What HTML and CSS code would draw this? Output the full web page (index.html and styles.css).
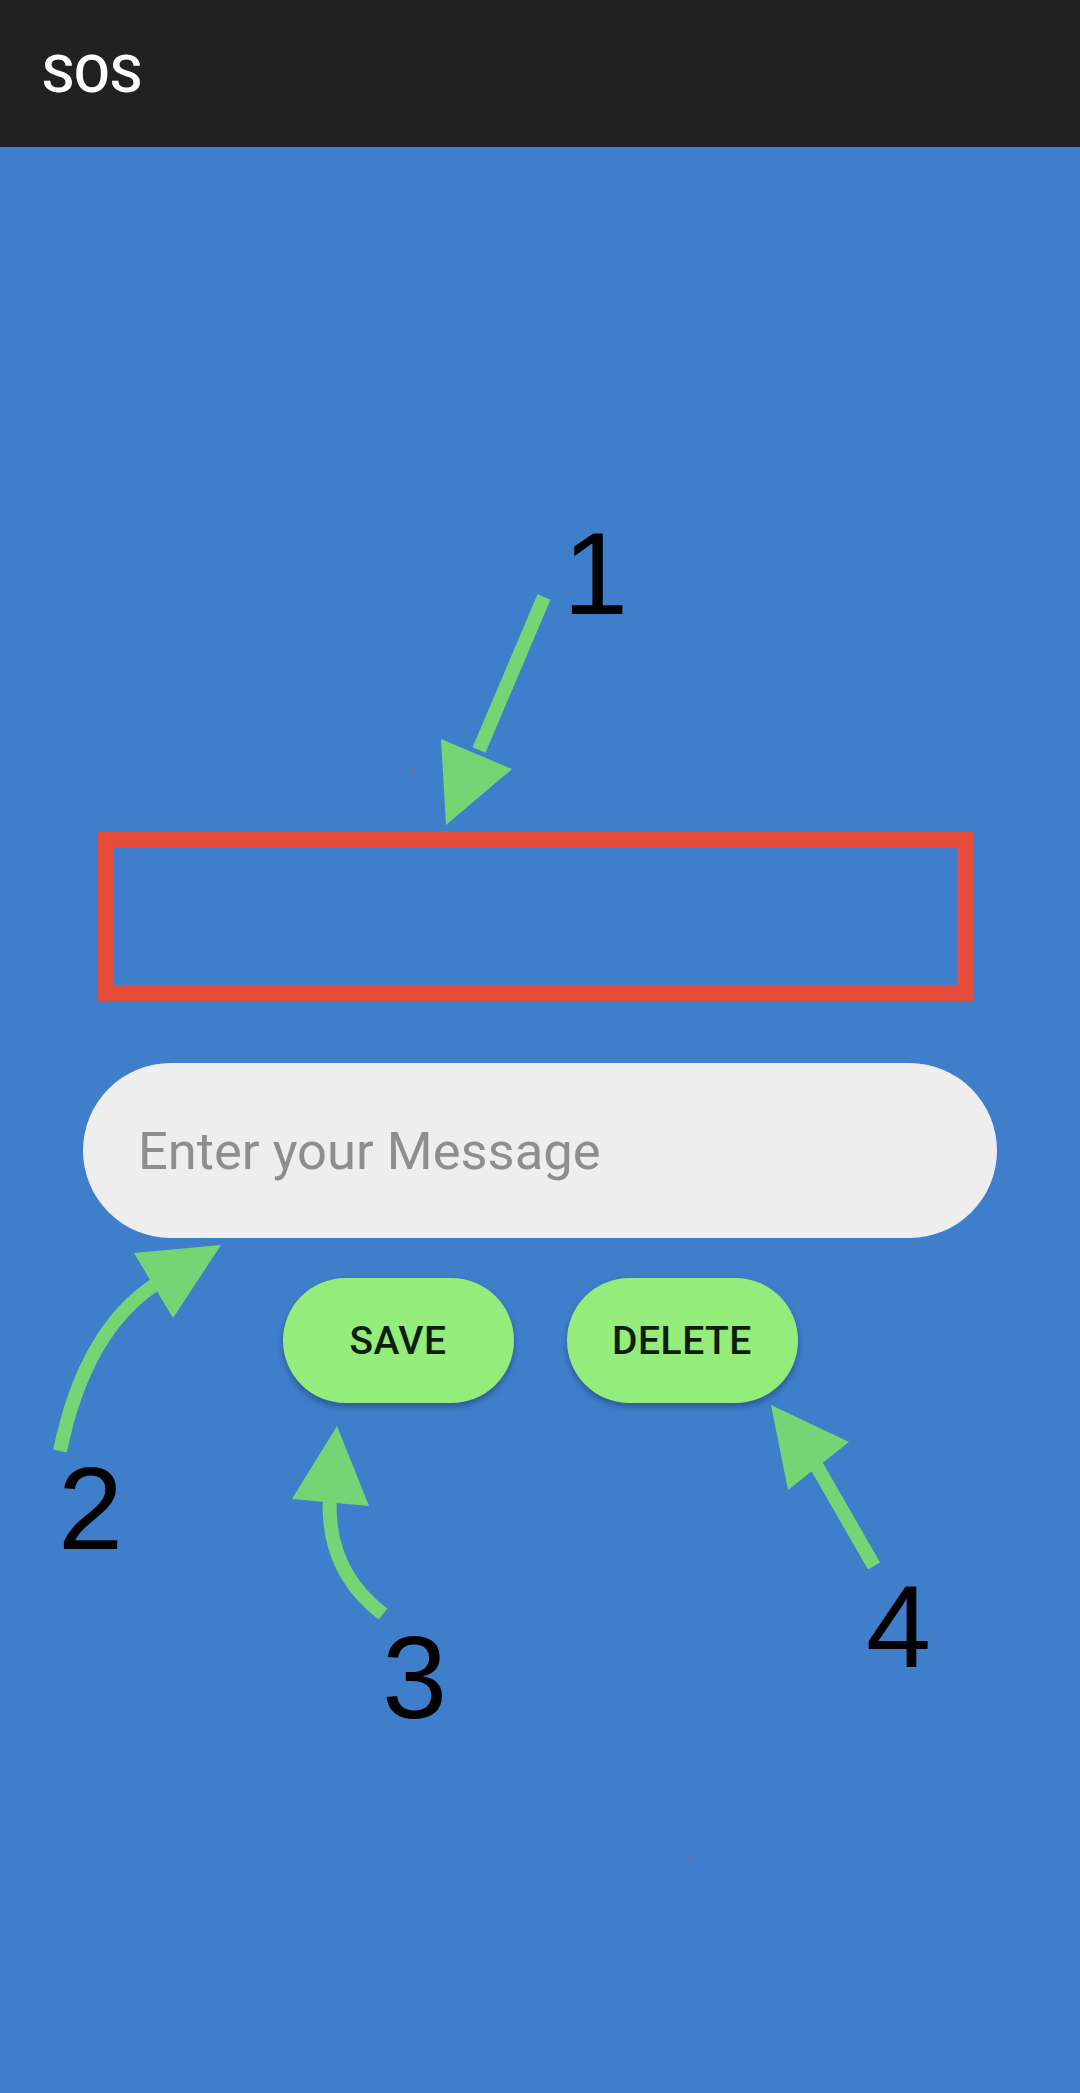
FILE: index.html
```html
<!DOCTYPE html>
<html lang="en">
<head>
<meta charset="utf-8">
<title>SOS</title>
<link rel="stylesheet" href="styles.css">
</head>
<body>
<div class="screen">
  <header class="toolbar">
    <h1 class="title">SOS</h1>
  </header>
  <main class="content">
    <input class="message" type="text" placeholder="Enter your Message">
    <div class="actions">
      <button class="btn" type="button">SAVE</button>
      <button class="btn" type="button">DELETE</button>
    </div>
  </main>
  <svg class="annotations" width="1080" height="2093" viewBox="0 0 1080 2093" aria-hidden="true">
    <rect class="frame" x="105" y="839" width="860" height="154"/>
    <g class="arrow">
      <line x1="544" y1="597" x2="479" y2="750"/>
      <polygon points="441,739 512,769 446,825"/>
      <path d="M60,1451 Q85,1330 156,1284"/>
      <polygon points="134,1253 221,1245 173,1318"/>
      <path d="M383,1614 Q325,1570 330,1495"/>
      <polygon points="337,1426 292,1499 369,1506"/>
      <line x1="874" y1="1566" x2="812" y2="1458"/>
      <polygon points="771,1405 849,1442 788,1490"/>
    </g>
    <g class="num">
      <text x="563" y="614">1</text>
      <text x="58" y="1549">2</text>
      <text x="382" y="1718">3</text>
      <text x="866" y="1667">4</text>
    </g>
    <circle class="speck" cx="413" cy="771" r="1.6"/>
    <circle class="speck" cx="688" cy="1860" r="1.6"/>
  </svg>
</div>
</body>
</html>
```

FILE: styles.css
```css
html, body {
  margin: 0;
  padding: 0;
}

body {
  width: 1080px;
  height: 2093px;
  overflow: hidden;
  background: #3e7ecb;
  font-family: Roboto, "Noto Sans", "Liberation Sans", sans-serif;
}

.screen {
  position: relative;
  width: 1080px;
  height: 2093px;
  background: #3e7ecb;
}

.toolbar {
  height: 147px;
  background: #212121;
  display: flex;
  align-items: center;
  padding-left: 42px;
  box-sizing: border-box;
}

.title {
  margin: 0;
  color: #ffffff;
  font-size: 52.5px;
  font-weight: 500;
  line-height: 1;
  padding-top: 2px;
}

.content {
  display: flex;
  flex-direction: column;
  align-items: center;
  padding-top: 916px;
}

.message {
  display: block;
  width: 914px;
  height: 175px;
  box-sizing: border-box;
  border: none;
  outline: none;
  border-radius: 88px;
  background: #efeeef;
  padding: 0 40px 0 55px;
  margin: 0;
  font-family: Roboto, "Noto Sans", sans-serif;
  font-size: 52.5px;
  color: #333;
}

.message::placeholder {
  color: #8e8e8e;
  opacity: 1;
}

.actions {
  display: flex;
  gap: 53px;
  margin-top: 40px;
}

.btn {
  width: 231px;
  height: 125px;
  border: none;
  border-radius: 63px;
  background: #94ec7b;
  color: #0f1d0b;
  font-family: Roboto, "Noto Sans", sans-serif;
  font-size: 39px;
  font-weight: 500;
  letter-spacing: 0.5px;
  padding: 0;
  box-shadow: 0 4px 6px rgba(0, 0, 0, 0.28);
  cursor: pointer;
}

.annotations {
  position: absolute;
  left: 0;
  top: 0;
  pointer-events: none;
}

.frame {
  fill: none;
  stroke: #e64c3c;
  stroke-width: 16;
}

.arrow line,
.arrow path {
  fill: none;
  stroke: #76d474;
  stroke-width: 14;
}

.arrow polygon {
  fill: #76d474;
}

.num text {
  font-family: "Liberation Sans", Arial, sans-serif;
  font-size: 117px;
  fill: #000000;
}

.speck {
  fill: #d9534f;
  opacity: 0.7;
}
```
